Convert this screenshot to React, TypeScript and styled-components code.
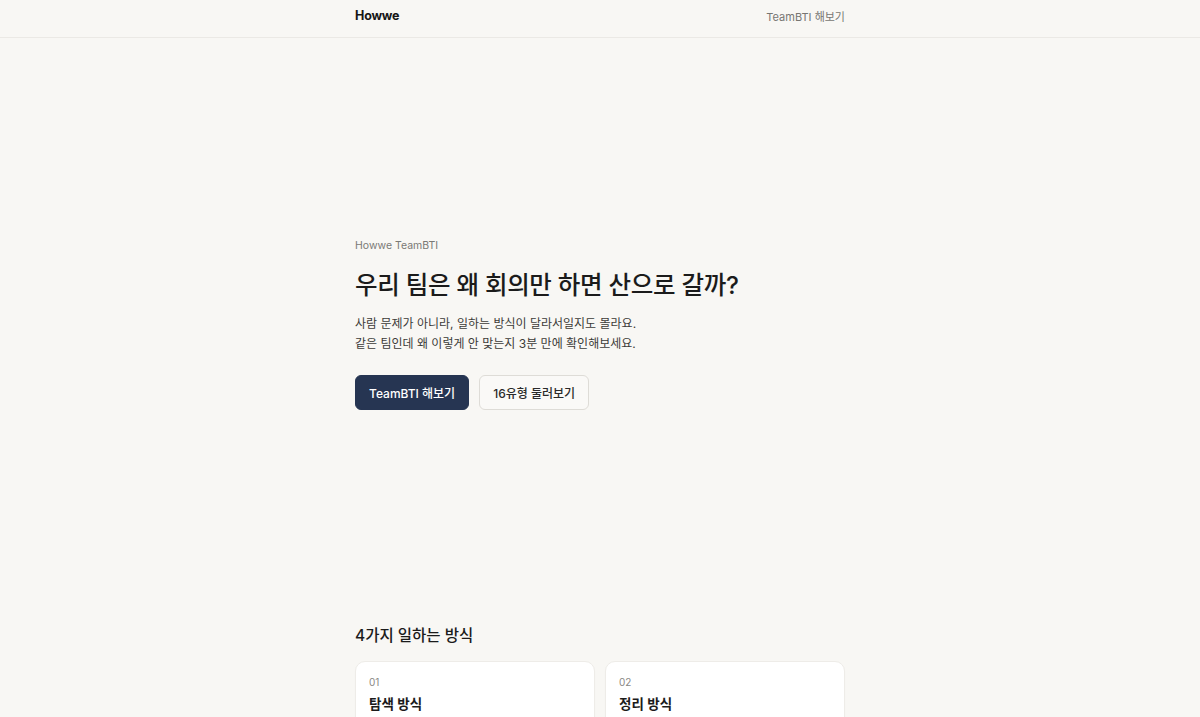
import styled, { createGlobalStyle } from "styled-components";

const GlobalStyle = createGlobalStyle`
  html, body {
    margin: 0;
    padding: 0;
    background: #f8f7f4;
    color: #1f1f1f;
    font-family: "Inter", "Noto Sans CJK KR", sans-serif;
    -webkit-font-smoothing: antialiased;
  }
  * { box-sizing: border-box; }
`;

const Header = styled.header`
  height: 38px;
  border-bottom: 1px solid #ebe9e5;
`;

const Inner = styled.div`
  width: 490px;
  margin: 0 auto;
`;

const HeaderRow = styled(Inner)`
  height: 100%;
  display: flex;
  align-items: center;
  justify-content: space-between;
  padding-bottom: 6px;
`;

const Logo = styled.a`
  font-size: 12.5px;
  font-weight: 700;
  color: #161616;
  text-decoration: none;
  letter-spacing: -0.2px;
`;

const NavLink = styled.a`
  font-size: 11px;
  color: #777672;
  text-decoration: none;
`;

// hero takes most of the viewport, content centred vertically
const Hero = styled.section`
  min-height: 80vh;
  display: flex;
  align-items: center;
`;

const Eyebrow = styled.p`
  margin: 0 0 18px;
  font-size: 10.5px;
  color: #7a7975;
`;

const Title = styled.h1`
  margin: 0 0 12px;
  font-size: 24.5px;
  font-weight: 500;
  line-height: 1.3;
  letter-spacing: -0.3px;
  color: #1b1b1b;
`;

const Lead = styled.p`
  margin: 0 0 21px;
  font-size: 12px;
  line-height: 20px;
  color: #3c3b38;
`;

const Actions = styled.div`
  display: flex;
  gap: 10px;
`;

const Button = styled.a<{ $primary?: boolean }>`
  display: inline-flex;
  align-items: center;
  justify-content: center;
  height: 35px;
  padding: 0 13px;
  border-radius: 6px;
  font-size: 12px;
  font-weight: 500;
  text-decoration: none;
  background: ${(p) => (p.$primary ? "#263552" : "#faf9f7")};
  color: ${(p) => (p.$primary ? "#ffffff" : "#2a2a2a")};
  border: 1px solid ${(p) => (p.$primary ? "#263552" : "#dedcd7")};
`;

const Section = styled.section`
  padding-top: 13px;
`;

const SectionTitle = styled.h2`
  margin: 0 0 14px;
  font-size: 15.5px;
  font-weight: 500;
  line-height: 22px;
  color: #1b1b1b;
`;

const CardGrid = styled.div`
  display: grid;
  grid-template-columns: 1fr 1fr;
  gap: 10px;
`;

const Card = styled.div`
  background: #ffffff;
  border: 1px solid #eeece8;
  border-radius: 10px;
  padding: 14px 13px 20px;
  box-shadow: 0 1px 2px rgba(0, 0, 0, 0.02);
`;

const CardNum = styled.div`
  font-size: 10px;
  color: #8a8985;
  margin-bottom: 5px;
`;

const CardTitle = styled.div`
  font-size: 13.5px;
  font-weight: 600;
  color: #1b1b1b;
`;

const cards = [
  { num: "01", title: "탐색 방식" },
  { num: "02", title: "정리 방식" },
  { num: "03", title: "결정 방식" },
  { num: "04", title: "실행 방식" },
];

export default function App() {
  return (
    <>
      <GlobalStyle />
      <Header>
        <HeaderRow>
          <Logo href="#">Howwe</Logo>
          <NavLink href="#">TeamBTI 해보기</NavLink>
        </HeaderRow>
      </Header>
      <Hero>
        <Inner>
          <Eyebrow>Howwe TeamBTI</Eyebrow>
          <Title>우리 팀은 왜 회의만 하면 산으로 갈까?</Title>
          <Lead>
            사람 문제가 아니라, 일하는 방식이 달라서일지도 몰라요.
            <br />
            같은 팀인데 왜 이렇게 안 맞는지 3분 만에 확인해보세요.
          </Lead>
          <Actions>
            <Button href="#" $primary>
              TeamBTI 해보기
            </Button>
            <Button href="#">16유형 둘러보기</Button>
          </Actions>
        </Inner>
      </Hero>
      <Section>
        <Inner>
          <SectionTitle>4가지 일하는 방식</SectionTitle>
          <CardGrid>
            {cards.map((c) => (
              <Card key={c.num}>
                <CardNum>{c.num}</CardNum>
                <CardTitle>{c.title}</CardTitle>
              </Card>
            ))}
          </CardGrid>
        </Inner>
      </Section>
    </>
  );
}
